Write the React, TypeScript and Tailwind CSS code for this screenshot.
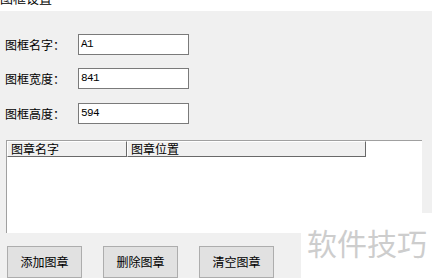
import React from 'react';

const cjk = { fontFamily: '"Noto Sans CJK SC", "Noto Sans", sans-serif' };

interface FieldRowProps {
  label: string;
  value: string;
  className?: string;
}

function FieldRow({ label, value, className }: FieldRowProps) {
  return (
    <div className={`flex items-center ${className ?? ''}`}>
      <div className="w-[78px] pl-[5px] text-[12px] leading-[12px] text-black">{label}</div>
      <div
        className="w-[111px] h-[21px] bg-white border border-[#7a7a7a] pl-[2px] flex items-center text-[11px] tracking-[-0.6px] text-black"
        style={{ fontFamily: '"Liberation Mono", monospace' }}
      >
        {value}
      </div>
    </div>
  );
}

function ActionButton({ label }: { label: string }) {
  return (
    <button className="w-[75px] h-[32px] bg-[#e1e1e1] border border-[#adadad] text-[12px] leading-[12px] text-black flex items-center justify-center pb-[1px]">
      {label}
    </button>
  );
}

export default function App() {
  return (
    <div className="relative w-[432px] h-[278px] overflow-hidden bg-white" style={cjk}>
      {/* Title strip (cut off at the top) */}
      <div className="h-[11px] overflow-hidden bg-white">
        <div className="mt-[-9px] text-[13px] leading-[13px] text-black">图框设置</div>
      </div>

      <div className="h-[267px] bg-[#f0f0f0] flex flex-col">
        <FieldRow label="图框名字：" value="A1" className="mt-[23px]" />
        <FieldRow label="图框宽度：" value="841" className="mt-[13px]" />
        <FieldRow label="图框高度：" value="594" className="mt-[14px]" />

        {/* Seal list */}
        <div className="mt-[16px] ml-[6px] w-[416px] h-[94px] bg-white border-t border-l border-[#a0a0a0] flex flex-col">
          <div className="flex h-[16px] text-[12px] leading-[12px] text-black">
            <div className="w-[120px] bg-[#f0f0f0] border-t border-l border-white border-r border-r-[#696969] border-b border-b-[#696969] pl-[3px] flex items-center">
              图章名字
            </div>
            <div className="w-[239px] bg-[#f0f0f0] border-t border-l border-white border-r border-r-[#696969] border-b border-b-[#696969] pl-[3px] flex items-center">
              图章位置
            </div>
          </div>
        </div>

        {/* Buttons */}
        <div className="mt-[13px] ml-[7px] flex gap-[21px]">
          <ActionButton label="添加图章" />
          <ActionButton label="删除图章" />
          <ActionButton label="清空图章" />
        </div>
      </div>

      {/* Watermark overlay */}
      <div className="absolute left-[301px] top-[213px] w-[131px] h-[65px] bg-white pl-[6px] pt-[14px]">
        <div className="text-[30px] leading-[30px] text-[#cdcdcd] whitespace-nowrap">软件技巧</div>
      </div>
    </div>
  );
}
